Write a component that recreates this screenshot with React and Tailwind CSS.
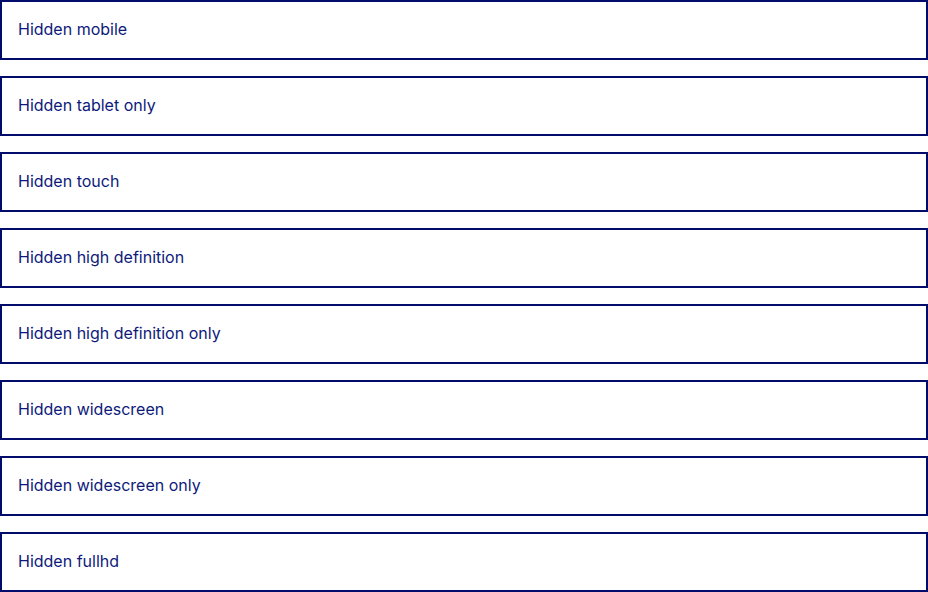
export default function App() {
  const items = [
    "Hidden mobile",
    "Hidden tablet only",
    "Hidden touch",
    "Hidden high definition",
    "Hidden high definition only",
    "Hidden widescreen",
    "Hidden widescreen only",
    "Hidden fullhd",
  ];
  return (
    <div className="flex flex-col gap-4 bg-white" style={{ fontFamily: "Inter, 'Noto Sans', sans-serif" }}>
      {items.map((t) => (
        <div key={t} className="border-2 border-[#000b6b] px-4 pt-[15px] pb-[17px] text-base leading-6 text-[#0d1a7a]">
          {t}
        </div>
      ))}
    </div>
  );
}
